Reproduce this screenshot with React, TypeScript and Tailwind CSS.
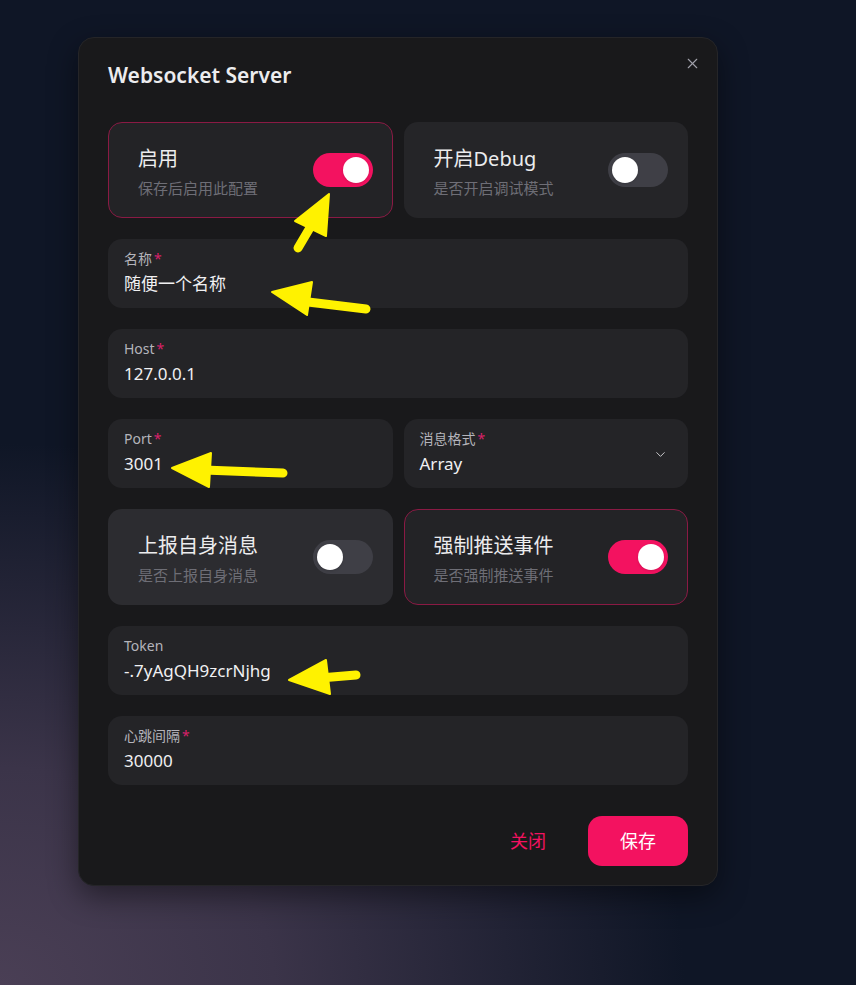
import { X, ChevronDown } from 'lucide-react';

const font = { fontFamily: '"Noto Sans", "Noto Sans CJK SC", sans-serif' };

function Toggle({ on }: { on: boolean }) {
    return (
        <div
            className={
                on
                    ? 'w-[60px] h-[34px] rounded-full bg-[#f31260] flex items-center justify-end px-[4px] shrink-0'
                    : 'w-[60px] h-[34px] rounded-full bg-[#3f3f46] flex items-center justify-start px-[4px] shrink-0'
            }
        >
            <div className="w-[26px] h-[26px] rounded-full bg-white shadow-sm" />
        </div>
    );
}

function SwitchCard({ title, desc, on, light }: { title: string; desc: string; on: boolean; light?: boolean }) {
    return (
        <div
            className={
                on
                    ? 'h-[96px] rounded-[14px] border border-[#8a1a44] bg-[#232326] flex items-center justify-between pl-[29px] pr-[19px]'
                    : light
                      ? 'h-[96px] rounded-[14px] border border-transparent bg-[#2c2c30] flex items-center justify-between pl-[29px] pr-[19px]'
                      : 'h-[96px] rounded-[14px] border border-transparent bg-[#252528] flex items-center justify-between pl-[29px] pr-[19px]'
            }
        >
            <div className="flex flex-col gap-[6px] mt-[3px]">
                <div className="text-[20px] leading-[26px] text-[#ececee]">{title}</div>
                <div className="text-[15px] leading-[20px] text-[#6e6e76]">{desc}</div>
            </div>
            <Toggle on={on} />
        </div>
    );
}

function Field({ label, value, required, select }: { label: string; value: string; required?: boolean; select?: boolean }) {
    return (
        <div className="h-[69px] rounded-[14px] bg-[#242427] pl-[16px] pr-[20px] pt-[10px] flex items-start justify-between">
            <div className="flex flex-col">
                <div className="text-[14px] leading-[20px] text-[#b4b4bb]">
                    {label}
                    {required && <span className="text-[#d8216a] ml-[2px]">*</span>}
                </div>
                <div className="mt-[2px] text-[17px] leading-[26px] text-[#f0f0f2]">{value}</div>
            </div>
            {select && <ChevronDown size={15} strokeWidth={1.5} className="text-[#d4d4d8] mt-[18px]" />}
        </div>
    );
}

// yellow annotation arrows drawn over the screenshot
const arrows = [
    { tip: [329, 194], a: [295, 221], b: [326, 236], tail: [298, 248], neck: [311, 226] },
    { tip: [272, 292], a: [312, 282], b: [307, 315], tail: [366, 309], neck: [300, 301] },
    { tip: [172, 468], a: [211, 453], b: [209, 487], tail: [283, 473], neck: [204, 470] },
    { tip: [289, 680], a: [326, 660], b: [330, 694], tail: [356, 675], neck: [320, 678] },
];

function Arrows() {
    return (
        <svg className="absolute inset-0 pointer-events-none" width={856} height={985}>
            {arrows.map((ar, i) => (
                <g key={i} fill="#fff200" stroke="#fff200" strokeLinecap="round" strokeLinejoin="round">
                    <line x1={ar.neck[0]} y1={ar.neck[1]} x2={ar.tail[0]} y2={ar.tail[1]} strokeWidth={9} />
                    <polygon points={`${ar.tip.join(',')} ${ar.a.join(',')} ${ar.b.join(',')}`} strokeWidth={2} />
                </g>
            ))}
        </svg>
    );
}

export default function App() {
    return (
        <div
            className="relative w-[856px] h-[985px] overflow-hidden bg-[#0f1626] bg-[radial-gradient(ellipse_80%_55%_at_0%_100%,#4a3f55_0%,#3b3449_40%,transparent_100%)] pt-[37px] pl-[78px]"
            style={font}
        >
            <div className="w-[640px] rounded-[16px] bg-[#19191b] border border-[#252528] shadow-[0_10px_30px_rgba(0,0,0,0.45)] flex flex-col">
                {/* Header */}
                <div className="flex items-start justify-between pl-[29px] pr-[16px] pt-[22px] pb-[32px]">
                    <div className="text-[21px] leading-[30px] font-semibold text-[#ececee]">Websocket Server</div>
                    <X size={17} strokeWidth={1.6} className="text-[#a1a1aa] mt-[-5px]" />
                </div>

                {/* Body */}
                <div className="flex flex-col gap-[21px] px-[29px]">
                    <div className="grid grid-cols-2 gap-[11px]">
                        <SwitchCard title="启用" desc="保存后启用此配置" on />
                        <SwitchCard title="开启Debug" desc="是否开启调试模式" on={false} />
                    </div>
                    <Field label="名称" value="随便一个名称" required />
                    <Field label="Host" value="127.0.0.1" required />
                    <div className="grid grid-cols-2 gap-[11px]">
                        <Field label="Port" value="3001" required />
                        <Field label="消息格式" value="Array" required select />
                    </div>
                    <div className="grid grid-cols-2 gap-[11px]">
                        <SwitchCard title="上报自身消息" desc="是否上报自身消息" on={false} light />
                        <SwitchCard title="强制推送事件" desc="是否强制推送事件" on />
                    </div>
                    <Field label="Token" value="-.7yAgQH9zcrNjhg" />
                    <Field label="心跳间隔" value="30000" required />
                </div>

                {/* Footer */}
                <div className="flex justify-end gap-[10px] px-[29px] pt-[31px] pb-[19px]">
                    <button className="w-[100px] h-[50px] rounded-[14px] text-[18px] text-[#f31260]">关闭</button>
                    <button className="w-[100px] h-[50px] rounded-[14px] bg-[#f31260] text-[18px] text-white">保存</button>
                </div>
            </div>
            <Arrows />
        </div>
    );
}
